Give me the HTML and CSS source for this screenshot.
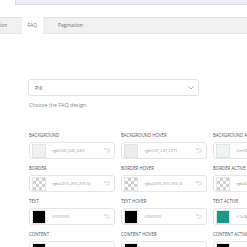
FILE: index.html
```html
<!DOCTYPE html>
<html lang="en">
<head>
	<meta charset="UTF-8">
	<title>FAQ settings</title>
	<link rel="stylesheet" href="styles.css">
</head>
<body>
	<div class="top_wrap">
		<div class="top_field"></div>
	</div>

	<div class="tabs">
		<div class="tab tab_first">Accordion</div>
		<div class="tab tab_active">FAQ</div>
		<div class="tab">Pagination</div>
	</div>

	<div class="content">
		<div class="select_box">
			<span>Pill</span>
			<svg class="chevron" width="6" height="4" viewBox="0 0 6 4"><path d="M0.5 0.5 L3 3 L5.5 0.5" fill="none" stroke="#999" stroke-width="0.8"/></svg>
		</div>
		<p class="help">Choose the FAQ design.</p>

		<div class="grid">
			<div class="field">
				<div class="label">Background</div>
				<div class="color_box"><i class="swatch" style="background:#f0f0f0"></i><span class="val">rgb(240,240,240)</span><svg class="reset" width="7" height="5" viewBox="0 0 7 5"><path d="M1.5 1 H5 a1.5 1.5 0 0 1 0 3 H2.5" fill="none" stroke="#ccc" stroke-width="0.7"/><path d="M2.5 0 L1.2 1 L2.5 2" fill="none" stroke="#ccc" stroke-width="0.7"/></svg></div>
			</div>
			<div class="field">
				<div class="label">Background hover</div>
				<div class="color_box"><i class="swatch" style="background:#ededed"></i><span class="val">rgb(237,237,237)</span><svg class="reset" width="7" height="5" viewBox="0 0 7 5"><path d="M1.5 1 H5 a1.5 1.5 0 0 1 0 3 H2.5" fill="none" stroke="#ccc" stroke-width="0.7"/><path d="M2.5 0 L1.2 1 L2.5 2" fill="none" stroke="#ccc" stroke-width="0.7"/></svg></div>
			</div>
			<div class="field">
				<div class="label">Background active</div>
				<div class="color_box"><i class="swatch" style="background:#eef4f1"></i><span class="val">#eef4f1</span><svg class="reset" width="7" height="5" viewBox="0 0 7 5"><path d="M1.5 1 H5 a1.5 1.5 0 0 1 0 3 H2.5" fill="none" stroke="#ccc" stroke-width="0.7"/><path d="M2.5 0 L1.2 1 L2.5 2" fill="none" stroke="#ccc" stroke-width="0.7"/></svg></div>
			</div>

			<div class="field">
				<div class="label">Border</div>
				<div class="color_box"><i class="swatch checker"></i><span class="val">rgba(255,255,255,0)</span><svg class="reset" width="7" height="5" viewBox="0 0 7 5"><path d="M1.5 1 H5 a1.5 1.5 0 0 1 0 3 H2.5" fill="none" stroke="#ccc" stroke-width="0.7"/><path d="M2.5 0 L1.2 1 L2.5 2" fill="none" stroke="#ccc" stroke-width="0.7"/></svg></div>
			</div>
			<div class="field">
				<div class="label">Border hover</div>
				<div class="color_box"><i class="swatch checker"></i><span class="val">rgba(255,255,255,0)</span><svg class="reset" width="7" height="5" viewBox="0 0 7 5"><path d="M1.5 1 H5 a1.5 1.5 0 0 1 0 3 H2.5" fill="none" stroke="#ccc" stroke-width="0.7"/><path d="M2.5 0 L1.2 1 L2.5 2" fill="none" stroke="#ccc" stroke-width="0.7"/></svg></div>
			</div>
			<div class="field">
				<div class="label">Border active</div>
				<div class="color_box"><i class="swatch checker"></i><span class="val">rgba(255,255,255,0)</span><svg class="reset" width="7" height="5" viewBox="0 0 7 5"><path d="M1.5 1 H5 a1.5 1.5 0 0 1 0 3 H2.5" fill="none" stroke="#ccc" stroke-width="0.7"/><path d="M2.5 0 L1.2 1 L2.5 2" fill="none" stroke="#ccc" stroke-width="0.7"/></svg></div>
			</div>

			<div class="field">
				<div class="label">Text</div>
				<div class="color_box"><i class="swatch" style="background:#000"></i><span class="val">#000000</span><svg class="reset" width="7" height="5" viewBox="0 0 7 5"><path d="M1.5 1 H5 a1.5 1.5 0 0 1 0 3 H2.5" fill="none" stroke="#ccc" stroke-width="0.7"/><path d="M2.5 0 L1.2 1 L2.5 2" fill="none" stroke="#ccc" stroke-width="0.7"/></svg></div>
			</div>
			<div class="field">
				<div class="label">Text hover</div>
				<div class="color_box"><i class="swatch" style="background:#000"></i><span class="val">#000000</span><svg class="reset" width="7" height="5" viewBox="0 0 7 5"><path d="M1.5 1 H5 a1.5 1.5 0 0 1 0 3 H2.5" fill="none" stroke="#ccc" stroke-width="0.7"/><path d="M2.5 0 L1.2 1 L2.5 2" fill="none" stroke="#ccc" stroke-width="0.7"/></svg></div>
			</div>
			<div class="field">
				<div class="label">Text active</div>
				<div class="color_box"><i class="swatch" style="background:#1a9a84"></i><span class="val">#1a9a84</span><svg class="reset" width="7" height="5" viewBox="0 0 7 5"><path d="M1.5 1 H5 a1.5 1.5 0 0 1 0 3 H2.5" fill="none" stroke="#ccc" stroke-width="0.7"/><path d="M2.5 0 L1.2 1 L2.5 2" fill="none" stroke="#ccc" stroke-width="0.7"/></svg></div>
			</div>

			<div class="field">
				<div class="label">Content</div>
				<div class="color_box"><i class="swatch" style="background:#000"></i><span class="val">#000000</span><svg class="reset" width="7" height="5" viewBox="0 0 7 5"><path d="M1.5 1 H5 a1.5 1.5 0 0 1 0 3 H2.5" fill="none" stroke="#ccc" stroke-width="0.7"/><path d="M2.5 0 L1.2 1 L2.5 2" fill="none" stroke="#ccc" stroke-width="0.7"/></svg></div>
			</div>
			<div class="field">
				<div class="label">Content hover</div>
				<div class="color_box"><i class="swatch" style="background:#000"></i><span class="val">#000000</span><svg class="reset" width="7" height="5" viewBox="0 0 7 5"><path d="M1.5 1 H5 a1.5 1.5 0 0 1 0 3 H2.5" fill="none" stroke="#ccc" stroke-width="0.7"/><path d="M2.5 0 L1.2 1 L2.5 2" fill="none" stroke="#ccc" stroke-width="0.7"/></svg></div>
			</div>
			<div class="field">
				<div class="label">Content active</div>
				<div class="color_box"><i class="swatch" style="background:#000"></i><span class="val">#000000</span><svg class="reset" width="7" height="5" viewBox="0 0 7 5"><path d="M1.5 1 H5 a1.5 1.5 0 0 1 0 3 H2.5" fill="none" stroke="#ccc" stroke-width="0.7"/><path d="M2.5 0 L1.2 1 L2.5 2" fill="none" stroke="#ccc" stroke-width="0.7"/></svg></div>
			</div>
		</div>
	</div>
</body>
</html>
```

FILE: styles.css
```css
html, body{
	margin: 0;
	padding: 0;
	background: #fff;
	overflow: hidden;
	font-family: "Open Sans", "Liberation Sans", sans-serif;
	color: #555;
}
.top_wrap{
	height: 17px;
	padding-left: 15px;
}
.top_field{
	height: 4px;
	background: #ededf3;
	border-left: 1px solid #dcdce4;
	border-bottom: 1px solid #dcdce4;
}
.tabs{
	display: flex;
	gap: 10px;
	height: 15px;
	background: #f0f0f0;
	border-top: 1px solid #e2e2e2;
	border-bottom: 1px solid #e6e6e6;
}
.tab{
	padding: 0 5px;
	font-size: 5px;
	line-height: 15px;
	color: #777;
}
.tab_first{
	margin-left: -21px;
}
.tab_active{
	background: #fff;
	margin-top: -1px;
	margin-bottom: -1px;
	line-height: 17px;
	padding: 0 6px 0 5px;
}
.content{
	padding: 45px 0 0 28px;
}
.select_box{
	width: 159px;
	height: 15px;
	border: 1px solid #e3e3e3;
	border-radius: 3px;
	display: flex;
	align-items: center;
	justify-content: space-between;
	padding: 0 4px 0 6px;
	font-size: 5.5px;
	color: #666;
}
.chevron{
	display: block;
}
.help{
	margin: 5px 0 0 1px;
	font-size: 5.3px;
	color: #888;
}
.grid{
	display: grid;
	grid-template-columns: 86px 86px 86px;
	column-gap: 6px;
	row-gap: 5px;
	margin-top: 22px;
	padding-left: 1px;
}
.label{
	font-size: 4.4px;
	line-height: 8px;
	text-transform: uppercase;
	color: #555;
	margin-bottom: 3px;
}
.color_box{
	height: 15px;
	border: 1px solid #e6e6e6;
	border-radius: 3px;
	display: flex;
	align-items: center;
	padding: 0 4px 0 2px;
}
.swatch{
	display: block;
	width: 12px;
	height: 12px;
	border: 0.5px solid #e4e4e4;
	flex: none;
}
.checker{
	background: repeating-conic-gradient(#cfcfcf 0 25%, #fff 0 50%) 0 0 / 6px 6px;
}
.val{
	margin-left: 6px;
	font-size: 4.2px;
	color: #999;
	flex: 1;
	white-space: nowrap;
	overflow: hidden;
}
.reset{
	display: block;
	flex: none;
}
```
